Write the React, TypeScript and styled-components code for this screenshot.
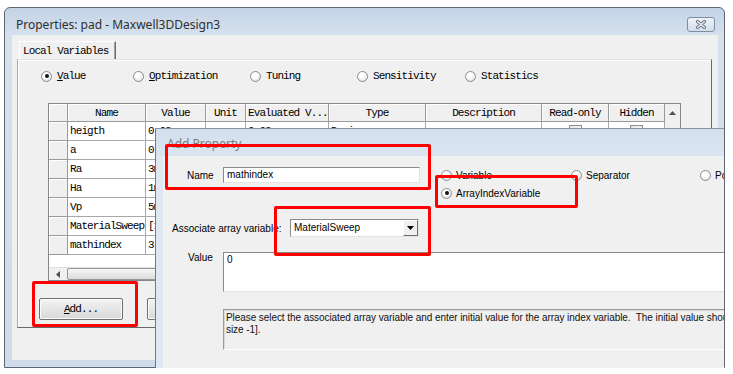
import * as React from 'react';
import styled, { createGlobalStyle, css } from 'styled-components';

//region [[ Styles ]]

const MONO = `"Liberation Mono", "DejaVu Sans Mono", monospace`;
const SANS = `"Liberation Sans", Arial, sans-serif`;
const UI = `"Noto Sans", "Open Sans", sans-serif`;

const GlobalStyle = createGlobalStyle`
  html, body {
    margin: 0;
    padding: 0;
    background: #ffffff;
  }
  * {
    box-sizing: border-box;
  }
`;

const Desktop = styled.div`
  position: relative;
  width: 733px;
  height: 374px;
  overflow: hidden;
  background: #ffffff;
`;

const MainWindow = styled.div`
  position: absolute;
  left: 4px;
  top: 7px;
  width: 721px;
  height: 361px;
  display: flex;
  flex-direction: column;
  border: 1px solid #5e6873;
  border-radius: 6px 6px 0 0;
  background: linear-gradient(#c3d3e6, #d6e1ee 28px, #cfdbe9);
`;

const TitleBar = styled.div`
  height: 27px;
  flex-shrink: 0;
  display: flex;
  align-items: center;
  justify-content: space-between;
  padding: 5px 9px 0 11px;
  font-family: ${UI};
  font-size: 12px;
  color: #2e2e2e;
`;

const CloseButton = styled.div`
  width: 28px;
  height: 15px;
  display: flex;
  align-items: center;
  justify-content: center;
  border: 1px solid #7d8ea3;
  border-radius: 3px;
  background: linear-gradient(#eef3f9, #d2ddea);
`;

const WindowBody = styled.div`
  flex: 1;
  display: flex;
  padding: 0 6px 7px 7px;
`;

const Client = styled.div`
  flex: 1;
  display: flex;
  flex-direction: column;
  padding: 6px 6px 0 5px;
  background: #f0f0f0;
  font-family: ${MONO};
  font-size: 11px;
  letter-spacing: -0.9px;
  color: #000;
`;

const TabStrip = styled.div`
  display: flex;
  height: 18px;
  padding-left: 2px;
`;

const Tab = styled.div`
  width: 97px;
  height: 18px;
  padding: 3px 0 0 3px;
  border-top: 1px solid #ffffff;
  border-left: 1px solid #ffffff;
  border-right: 1px solid #6e6e6e;
  box-shadow: inset -1px 0 #a0a0a0;
  white-space: nowrap;
`;

const TabPage = styled.div`
  height: 269px;
  display: flex;
  flex-direction: column;
  padding: 8px 0 0 21px;
  border: 1px solid;
  border-color: #e2e2e2 #696969 #696969 #a8a8a8;
  box-shadow: inset 1px 1px #ffffff;
`;

const RadioRow = styled.div`
  display: grid;
  grid-template-columns: 92px 117px 107px 108px auto;
  height: 14px;
  padding-left: 2px;
  margin-top: 1px;
  align-items: center;
`;

const RadioItem = styled.div<{ $gap: number }>`
  display: flex;
  align-items: center;
  gap: ${(p) => p.$gap}px;
  white-space: nowrap;
`;

const RadioDot = styled.span<{ $checked?: boolean; $size: number }>`
  position: relative;
  flex-shrink: 0;
  width: ${(p) => p.$size}px;
  height: ${(p) => p.$size}px;
  border-radius: 50%;
  border: 1px solid #8b8d90;
  background: radial-gradient(circle at 40% 35%, #ffffff 30%, #d6d6d6);
  ${(p) =>
    p.$checked &&
    css`
      &::after {
        content: '';
        position: absolute;
        left: 50%;
        top: 50%;
        width: 4px;
        height: 4px;
        margin: -2px 0 0 -2px;
        border-radius: 50%;
        background: #151515;
      }
    `}
`;

const Mnemonic = styled.span`
  text-decoration: underline;
`;

const Table = styled.div`
  width: 633px;
  height: 178px;
  margin: 20px 0 0 9px;
  display: flex;
  flex-direction: column;
  border: 1px solid #828790;
  background: #ffffff;
`;

const TableBody = styled.div`
  height: 163px;
  display: flex;
`;

const Grid = styled.div`
  width: 616px;
  display: grid;
  grid-template-columns: 19px 78px 60px 40px 83px 97px 116px 67px 56px;
  grid-template-rows: 18px repeat(7, 19px);
  align-content: start;
`;

const HeaderCell = styled.div<{ $align?: string }>`
  display: flex;
  align-items: center;
  justify-content: ${(p) => p.$align || 'center'};
  padding: 0 2px;
  background: #f0f0f0;
  border-right: 1px solid #9a9a9a;
  border-bottom: 1px solid #9a9a9a;
  box-shadow: inset 1px 1px #ffffff;
  white-space: nowrap;
  overflow: hidden;
`;

const RowHeader = styled.div`
  background: #f0f0f0;
  border-right: 1px solid #9a9a9a;
  border-bottom: 1px solid #9a9a9a;
  box-shadow: inset 1px 1px #ffffff;
`;

const Cell = styled.div<{ $center?: boolean }>`
  display: flex;
  align-items: center;
  justify-content: ${(p) => (p.$center ? 'center' : 'flex-start')};
  padding: 0 2px;
  border-right: 1px solid #a8a8a8;
  border-bottom: 1px solid #a8a8a8;
  white-space: nowrap;
  overflow: hidden;
`;

const CheckBox = styled.span`
  width: 13px;
  height: 13px;
  border: 1px solid #8e8f8f;
  background: linear-gradient(135deg, #e6e6e6, #ffffff);
`;

const VScroll = styled.div`
  width: 15px;
  display: flex;
  flex-direction: column;
  background: #f0f0f0;
`;

const ScrollArrow = styled.div<{ $w: number; $h: number }>`
  width: ${(p) => p.$w}px;
  height: ${(p) => p.$h}px;
  flex-shrink: 0;
  display: flex;
  align-items: center;
  justify-content: center;
  background: #f0f0f0;
`;

const HScroll = styled.div`
  height: 13px;
  display: flex;
  background: #ececec;
  border-top: 1px solid #e0e0e0;
`;

const Thumb = styled.div`
  width: 420px;
  margin: 0 1px;
  border: 1px solid #999999;
  border-radius: 2px;
  background: linear-gradient(#f6f6f6, #dcdcdc);
`;

const ButtonRow = styled.div`
  display: flex;
  gap: 24px;
  margin-top: 17px;
`;

const PushButton = styled.div`
  width: 84px;
  height: 22px;
  display: flex;
  align-items: center;
  justify-content: center;
  border: 1px solid #707070;
  border-radius: 2px;
  background: linear-gradient(#f3f3f3, #e6e6e6 50%, #d8d8d8);
  box-shadow: inset 0 0 0 1px #fbfbfb;
`;

const Dialog = styled.div`
  position: absolute;
  left: 155px;
  top: 128px;
  width: 569px;
  height: 240px;
  display: flex;
  flex-direction: column;
  overflow: hidden;
  border-left: 1px solid #6c7a8a;
  border-top: 1px solid #8796a8;
  background: #dfe8f2;
`;

const DialogTitle = styled.div`
  height: 27px;
  flex-shrink: 0;
  padding: 6px 0 0 11px;
  font-family: ${UI};
  font-size: 12px;
  color: #7a7a7a;
  background: linear-gradient(#d3dfed, #dbe5f1);
`;

const DialogBody = styled.div`
  flex: 1;
  display: flex;
  padding-left: 7px;
`;

const DialogClient = styled.div`
  flex: 1;
  display: flex;
  flex-direction: column;
  background: #f0f0f0;
  font-family: ${SANS};
  font-size: 10px;
  color: #000;
  overflow: hidden;
`;

const TopSection = styled.div`
  display: flex;
  align-items: flex-start;
`;

const FieldRow = styled.div<{ $top: number; $align?: string }>`
  display: flex;
  align-items: ${(p) => p.$align || 'center'};
  margin-top: ${(p) => p.$top}px;
  flex-shrink: 0;
`;

const FieldLabel = styled.div<{ $width: number; $indent: number }>`
  width: ${(p) => p.$width}px;
  padding-left: ${(p) => p.$indent}px;
  flex-shrink: 0;
  white-space: nowrap;
`;

const SunkenBox = styled.div<{ $width: number; $height: number; $bg?: string }>`
  width: ${(p) => p.$width}px;
  height: ${(p) => p.$height}px;
  flex-shrink: 0;
  border: 1px solid;
  border-color: #8a8a8a #e3e3e3 #e3e3e3 #8a8a8a;
  background: ${(p) => p.$bg || '#ffffff'};
  padding: 1px 3px;
  white-space: nowrap;
  overflow: hidden;
`;

const TextValue = styled.div`
  line-height: 12px;
`;

const DialogRadios = styled.div`
  display: grid;
  grid-template-columns: 130px 129px 200px;
  grid-auto-rows: 14px;
  row-gap: 4px;
  margin: 12px 0 0 21px;
  align-items: center;
`;

const Combo = styled.div`
  width: 129px;
  height: 18px;
  display: flex;
  border: 1px solid;
  border-color: #8a8a8a #e3e3e3 #e3e3e3 #8a8a8a;
  background: #ffffff;
`;

const ComboText = styled.div`
  flex: 1;
  padding: 2px 0 0 3px;
`;

const ComboButton = styled.div`
  width: 15px;
  display: flex;
  align-items: center;
  justify-content: center;
  background: #f0f0f0;
  border: 1px solid;
  border-color: #ffffff #6d6d6d #6d6d6d #ffffff;
`;

const Description = styled.div`
  width: 560px;
  height: 41px;
  flex-shrink: 0;
  margin: 17px 0 0 60px;
  padding: 2px 2px;
  border: 1px solid;
  border-color: #9a9a9a #ffffff #ffffff #9a9a9a;
  box-shadow: inset 1px 1px #d8d8d8;
  white-space: pre;
  line-height: 12px;
  letter-spacing: -0.07px;
  color: #111;
`;

const Highlight = styled.div<{ $x: number; $y: number; $w: number; $h: number }>`
  position: absolute;
  left: ${(p) => p.$x}px;
  top: ${(p) => p.$y}px;
  width: ${(p) => p.$w}px;
  height: ${(p) => p.$h}px;
  border: 3px solid #ff0000;
  border-radius: 2px;
  pointer-events: none;
`;

//endregion [[ Styles ]]

//region [[ Data ]]

const rows = [
  { name: 'heigth', value: '0.02', evaluated: '0.02', type: 'Design' },
  { name: 'a', value: '0', evaluated: '0', type: 'Design' },
  { name: 'Ra', value: '3mm', evaluated: '3mm', type: 'Design' },
  { name: 'Ha', value: '1mm', evaluated: '1mm', type: 'Design' },
  { name: 'Vp', value: '5mm', evaluated: '5mm', type: 'Design' },
  { name: 'MaterialSweep', value: '[1, 2, 3]', evaluated: '[1, 2, 3]', type: 'Design' },
  { name: 'mathindex', value: '3', evaluated: '3', type: 'Design' },
];

const highlights = [
  { x: 165, y: 144, w: 266, h: 46 },
  { x: 435, y: 175, w: 143, h: 33 },
  { x: 274, y: 206, w: 157, h: 50 },
  { x: 32, y: 281, w: 106, h: 46 },
];

//endregion [[ Data ]]

const Radio = ({ label, checked, size, gap }: { label: React.ReactNode; checked?: boolean; size: number; gap: number }) => (
  <RadioItem $gap={gap}>
    <RadioDot $size={size} $checked={checked} />
    <span>{label}</span>
  </RadioItem>
);

const CloseGlyph = () => (
  <svg width="12" height="9" viewBox="0 0 12 9">
    <path d="M2.5 1.5 L9.5 7.5 M9.5 1.5 L2.5 7.5" stroke="#5e6c7d" strokeWidth="3" strokeLinecap="round" />
    <path d="M2.5 1.5 L9.5 7.5 M9.5 1.5 L2.5 7.5" stroke="#f4f6f9" strokeWidth="1.3" strokeLinecap="round" />
  </svg>
);

const Triangle = ({ dir, color }: { dir: 'up' | 'down' | 'left'; color: string }) => {
  const d = dir === 'up' ? 'M0 4 L3.5 0 L7 4 Z' : dir === 'down' ? 'M0 0 L7 0 L3.5 4 Z' : 'M4 0 L4 7 L0 3.5 Z';
  const w = dir === 'left' ? 4 : 7;
  const h = dir === 'left' ? 7 : 4;
  return (
    <svg width={w} height={h} viewBox={`0 0 ${w} ${h}`}>
      <path d={d} fill={color} />
    </svg>
  );
};

const PropertiesWindow = () => (
  <MainWindow>
    <TitleBar>
      <span>Properties: pad - Maxwell3DDesign3</span>
      <CloseButton>
        <CloseGlyph />
      </CloseButton>
    </TitleBar>
    <WindowBody>
      <Client>
        <TabStrip>
          <Tab>Local Variables</Tab>
        </TabStrip>
        <TabPage>
          <RadioRow>
            <Radio size={11} gap={5} checked label={<><Mnemonic>V</Mnemonic>alue</>} />
            <Radio size={11} gap={5} label={<><Mnemonic>O</Mnemonic>ptimization</>} />
            <Radio size={11} gap={5} label="Tuning" />
            <Radio size={11} gap={5} label="Sensitivity" />
            <Radio size={11} gap={5} label="Statistics" />
          </RadioRow>
          <Table>
            <TableBody>
              <Grid>
                <RowHeader />
                <HeaderCell>Name</HeaderCell>
                <HeaderCell>Value</HeaderCell>
                <HeaderCell>Unit</HeaderCell>
                <HeaderCell $align="flex-start">Evaluated V...</HeaderCell>
                <HeaderCell>Type</HeaderCell>
                <HeaderCell>Description</HeaderCell>
                <HeaderCell>Read-only</HeaderCell>
                <HeaderCell>Hidden</HeaderCell>
                {rows.map((r) => (
                  <React.Fragment key={r.name}>
                    <RowHeader />
                    <Cell>{r.name}</Cell>
                    <Cell>{r.value}</Cell>
                    <Cell />
                    <Cell>{r.evaluated}</Cell>
                    <Cell>{r.type}</Cell>
                    <Cell />
                    <Cell $center>
                      <CheckBox />
                    </Cell>
                    <Cell $center>
                      <CheckBox />
                    </Cell>
                  </React.Fragment>
                ))}
              </Grid>
              <VScroll>
                <ScrollArrow $w={15} $h={18}>
                  <Triangle dir="up" color="#505050" />
                </ScrollArrow>
              </VScroll>
            </TableBody>
            <HScroll>
              <ScrollArrow $w={17} $h={12}>
                <Triangle dir="left" color="#505050" />
              </ScrollArrow>
              <Thumb />
            </HScroll>
          </Table>
          <ButtonRow>
            <PushButton>
              <span>
                <Mnemonic>A</Mnemonic>dd...
              </span>
            </PushButton>
            <PushButton>Remove</PushButton>
          </ButtonRow>
        </TabPage>
      </Client>
    </WindowBody>
  </MainWindow>
);

const AddPropertyDialog = () => (
  <Dialog>
    <DialogTitle>Add Property</DialogTitle>
    <DialogBody>
      <DialogClient>
        <TopSection>
          <FieldRow $top={11}>
            <FieldLabel $width={60} $indent={24}>Name</FieldLabel>
            <SunkenBox $width={197} $height={16}>
              <TextValue>mathindex</TextValue>
            </SunkenBox>
          </FieldRow>
          <DialogRadios>
            <Radio size={11} gap={4} label="Variable" />
            <Radio size={11} gap={4} label="Separator" />
            <Radio size={11} gap={4} label="PostProcessingVariable" />
            <Radio size={11} gap={4} checked label="ArrayIndexVariable" />
          </DialogRadios>
        </TopSection>
        <FieldRow $top={19}>
          <FieldLabel $width={127} $indent={9}>Associate array variable:</FieldLabel>
          <Combo>
            <ComboText>MaterialSweep</ComboText>
            <ComboButton>
              <Triangle dir="down" color="#000000" />
            </ComboButton>
          </Combo>
        </FieldRow>
        <FieldRow $top={15} $align="flex-start">
          <FieldLabel $width={60} $indent={25}>Value</FieldLabel>
          <SunkenBox $width={540} $height={40}>
            <TextValue>0</TextValue>
          </SunkenBox>
        </FieldRow>
        <Description>
          {'Please select the associated array variable and enter initial value for the array index variable.  The initial value should be in [0, array\nsize -1].'}
        </Description>
      </DialogClient>
    </DialogBody>
  </Dialog>
);

export default function App() {
  return (
    <>
      <GlobalStyle />
      <Desktop>
        <PropertiesWindow />
        <AddPropertyDialog />
        {highlights.map((h, i) => (
          <Highlight key={i} $x={h.x} $y={h.y} $w={h.w} $h={h.h} />
        ))}
      </Desktop>
    </>
  );
}
